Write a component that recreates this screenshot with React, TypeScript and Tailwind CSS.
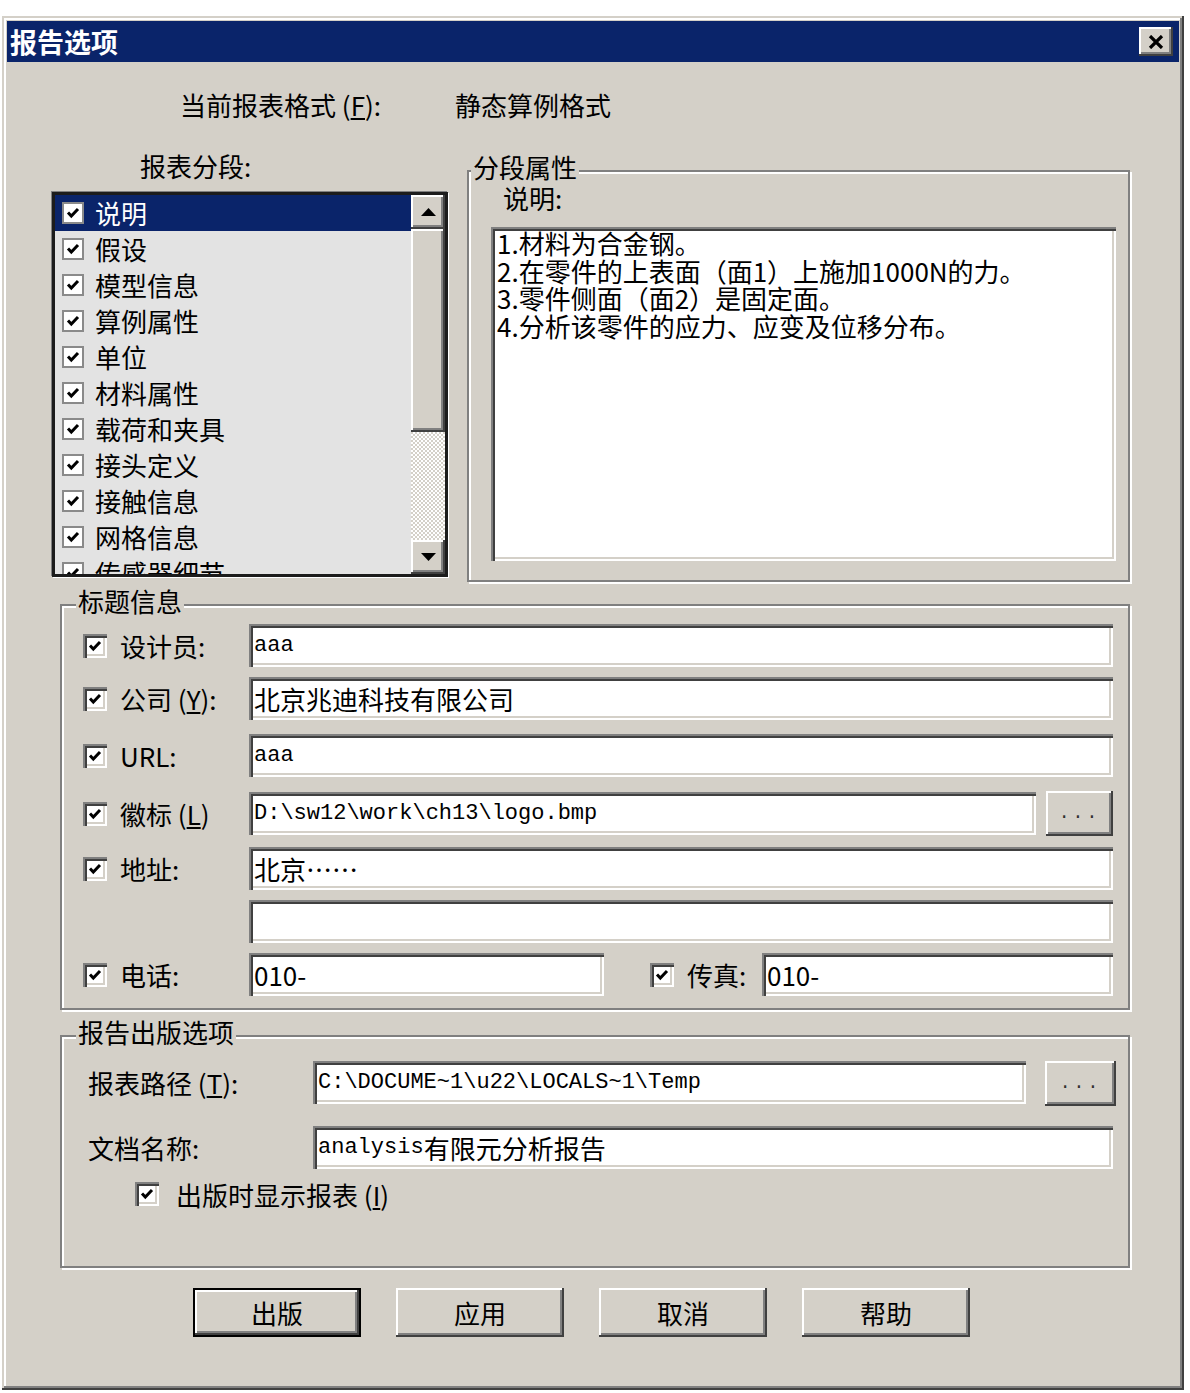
import React from 'react';

const cjk = "font-['Noto_Sans_CJK_SC',sans-serif]";
const mono = "font-['Liberation_Mono','Noto_Sans_CJK_SC',monospace]";
const raised = 'shadow-[inset_-2px_-2px_0_#404040,inset_2px_2px_0_#ffffff,inset_-4px_-4px_0_#808080]';
const sunken = 'shadow-[inset_2px_2px_0_#808080,inset_4px_4px_0_#404040,inset_-2px_-2px_0_#ffffff,inset_-4px_-4px_0_#d4d0c8]';
const etched = 'border-2 border-[#808080] shadow-[inset_2px_2px_0_#ffffff,2px_2px_0_#ffffff]';

const sections = ['说明', '假设', '模型信息', '算例属性', '单位', '材料属性', '载荷和夹具', '接头定义', '接触信息', '网格信息', '传感器细节'];

const notes = [
  '1.材料为合金钢。',
  '2.在零件的上表面（面1）上施加1000N的力。',
  '3.零件侧面（面2）是固定面。',
  '4.分析该零件的应力、应变及位移分布。',
];

function Tick() {
  return (
    <svg viewBox="0 0 16 16" className="w-full h-full">
      <path d="M3 7.5l3.3 3.5L13 4" fill="none" stroke="#000" strokeWidth="3" />
    </svg>
  );
}

// sunken 3D checkbox used on the dialog surface
function Check3D() {
  return (
    <span className={`block w-[24px] h-[24px] shrink-0 bg-white p-[4px] ${sunken}`}>
      <Tick />
    </span>
  );
}

// flat checkbox inside the list
function CheckFlat() {
  return (
    <span className="block w-[22px] h-[22px] shrink-0 bg-white border-2 border-[#8a8a8a] p-[1px]">
      <Tick />
    </span>
  );
}

function Field({ w, children }: { w: string; children?: React.ReactNode }) {
  return (
    <div className={`${w} h-[43px] shrink-0 bg-white ${sunken} pl-[5px] flex items-center overflow-hidden whitespace-nowrap`}>
      {children}
    </div>
  );
}

function Dots({ w }: { w: string }) {
  return (
    <button className={`${w} h-[45px] shrink-0 bg-[#d4d0c8] ${raised} flex items-center justify-center text-[18px] text-[#303030] tracking-[3px] ${mono}`}>
      ...
    </button>
  );
}

function Arrow({ down }: { down?: boolean }) {
  return (
    <div className={`h-[34px] shrink-0 bg-[#d4d0c8] ${raised} flex items-center justify-center`}>
      <svg width="15" height="8" viewBox="0 0 15 8">
        <polygon points={down ? '0,0 15,0 7.5,8' : '0,8 15,8 7.5,0'} fill="#000" />
      </svg>
    </div>
  );
}

export default function App() {
  return (
    <div className={`w-[1190px] h-[1393px] bg-white pt-[16px] pl-[2px] ${cjk} text-[26px] text-black`}>
      <div className="w-[1182px] h-[1374px] bg-[#d4d0c8] p-[5px] shadow-[inset_-2px_-2px_0_#404040,inset_2px_2px_0_#d4d0c8,inset_-4px_-4px_0_#808080,inset_4px_4px_0_#ffffff]">
        {/* title bar */}
        <div className="h-[41px] bg-[#0a246a] flex items-center justify-between pl-[3px] pr-[6px]">
          <span className="text-white font-bold text-[27px] leading-none">报告选项</span>
          <button className={`w-[34px] h-[29px] bg-[#d4d0c8] ${raised} flex items-center justify-center`}>
            <svg width="16" height="14" viewBox="0 0 16 14">
              <path d="M2 1l12 12M14 1L2 13" stroke="#000" strokeWidth="3.2" />
            </svg>
          </button>
        </div>

        {/* current format */}
        <div className="mt-[28px] h-[30px] leading-[30px] flex">
          <span className="ml-[173px] w-[275px]">
            当前报表格式 (<u>F</u>):
          </span>
          <span>静态算例格式</span>
        </div>

        {/* sections + properties */}
        <div className="mt-[31px] flex items-start">
          <div className="ml-[45px] w-[396px]">
            <div className="pl-[88px] h-[30px] leading-[30px]">报表分段:</div>
            <div className="mt-[11px] h-[385px] border-[3px] border-[#1c1c1c] shadow-[-1px_-1px_0_#808080,1px_1px_0_#ffffff] flex">
              <div className="flex-1 bg-[#e3e3e3] overflow-hidden">
                {sections.map((s, i) => (
                  <div
                    key={s}
                    className={`h-[36px] flex items-center pl-[7px] gap-[11px] ${i === 0 ? 'bg-[#0a246a] text-white' : ''}`}
                  >
                    <CheckFlat />
                    <span className="leading-none">{s}</span>
                  </div>
                ))}
              </div>
              <div className="w-[34px] flex flex-col">
                <Arrow />
                <div className={`h-[203px] bg-[#d4d0c8] ${raised}`} />
                <div className="flex-1 bg-[repeating-conic-gradient(#ffffff_0%_25%,#d4d0c8_0%_50%)] bg-[length:4px_4px]" />
                <Arrow down />
              </div>
            </div>
          </div>

          <div className={`ml-[19px] mt-[19px] w-[663px] h-[412px] ${etched}`}>
            <div className="-mt-[20px] ml-[2px] h-[30px] leading-[30px] w-fit px-[2px] bg-[#d4d0c8] relative">分段属性</div>
            <div className="mt-[1px] ml-[34px] h-[30px] leading-[30px]">说明:</div>
            <div className={`mt-[14px] ml-[22px] w-[625px] h-[334px] bg-white ${sunken} pl-[6px] pt-[2px] leading-[27.5px] whitespace-nowrap`}>
              {notes.map((n) => (
                <div key={n}>{n}</div>
              ))}
            </div>
          </div>
        </div>

        {/* title info */}
        <div className={`mt-[22px] ml-[53px] w-[1070px] h-[406px] ${etched}`}>
          <div className="-mt-[20px] ml-[14px] h-[30px] leading-[30px] w-fit px-[2px] bg-[#d4d0c8] relative">标题信息</div>

          <div className="mt-[8px] h-[43px] flex items-center">
            <span className="ml-[21px]"><Check3D /></span>
            <span className="ml-[13px] w-[129px]">设计员:</span>
            <Field w="w-[864px]"><span className={`${mono} text-[22px]`}>aaa</span></Field>
          </div>

          <div className="mt-[10px] h-[43px] flex items-center">
            <span className="ml-[21px]"><Check3D /></span>
            <span className="ml-[13px] w-[129px]">公司 (<u>Y</u>):</span>
            <Field w="w-[864px]">北京兆迪科技有限公司</Field>
          </div>

          <div className="mt-[14px] h-[43px] flex items-center">
            <span className="ml-[21px]"><Check3D /></span>
            <span className="ml-[13px] w-[129px]">URL:</span>
            <Field w="w-[864px]"><span className={`${mono} text-[22px]`}>aaa</span></Field>
          </div>

          <div className="mt-[15px] h-[43px] flex items-center">
            <span className="ml-[21px]"><Check3D /></span>
            <span className="ml-[13px] w-[129px]">徽标 (<u>L</u>)</span>
            <Field w="w-[787px]"><span className={`${mono} text-[22px]`}>D:\sw12\work\ch13\logo.bmp</span></Field>
            <span className="ml-[10px]"><Dots w="w-[67px]" /></span>
          </div>

          <div className="mt-[12px] h-[43px] flex items-center">
            <span className="ml-[21px]"><Check3D /></span>
            <span className="ml-[13px] w-[129px]">地址:</span>
            <Field w="w-[864px]">北京……</Field>
          </div>

          <div className="mt-[10px] h-[43px] flex items-center">
            <span className="ml-[187px]" />
            <Field w="w-[864px]" />
          </div>

          <div className="mt-[10px] h-[43px] flex items-center">
            <span className="ml-[21px]"><Check3D /></span>
            <span className="ml-[13px] w-[129px]">电话:</span>
            <Field w="w-[355px]">010-</Field>
            <span className="ml-[46px]"><Check3D /></span>
            <span className="ml-[13px] w-[75px]">传真:</span>
            <Field w="w-[351px]">010-</Field>
          </div>
        </div>

        {/* publish options */}
        <div className={`mt-[25px] ml-[53px] w-[1070px] h-[233px] ${etched}`}>
          <div className="-mt-[20px] ml-[14px] h-[30px] leading-[30px] w-fit px-[2px] bg-[#d4d0c8] relative">报告出版选项</div>

          <div className="mt-[14px] flex items-start">
            <span className="ml-[26px] w-[225px] h-[43px] leading-[43px]">报表路径 (<u>T</u>):</span>
            <Field w="w-[713px]"><span className={`${mono} text-[22px]`}>C:\DOCUME~1\u22\LOCALS~1\Temp</span></Field>
            <span className="ml-[19px]"><Dots w="w-[71px]" /></span>
          </div>

          <div className="mt-[20px] flex items-start">
            <span className="ml-[26px] w-[225px] h-[43px] leading-[43px]">文档名称:</span>
            <Field w="w-[800px]">
              <span className={`${mono} text-[22px]`}>analysis</span>
              <span>有限元分析报告</span>
            </Field>
          </div>

          <div className="mt-[10px] h-[30px] flex items-center">
            <span className="ml-[73px]"><Check3D /></span>
            <span className="ml-[17px]">出版时显示报表 (<u>I</u>)</span>
          </div>
        </div>

        {/* buttons */}
        <div className="mt-[20px] ml-[186px] flex gap-[35px]">
          <button className={`w-[168px] h-[49px] bg-[#d4d0c8] border-2 border-black ${raised}`}>出版</button>
          <button className={`w-[168px] h-[49px] bg-[#d4d0c8] ${raised}`}>应用</button>
          <button className={`w-[168px] h-[49px] bg-[#d4d0c8] ${raised}`}>取消</button>
          <button className={`w-[168px] h-[49px] bg-[#d4d0c8] ${raised}`}>帮助</button>
        </div>
      </div>
    </div>
  );
}
